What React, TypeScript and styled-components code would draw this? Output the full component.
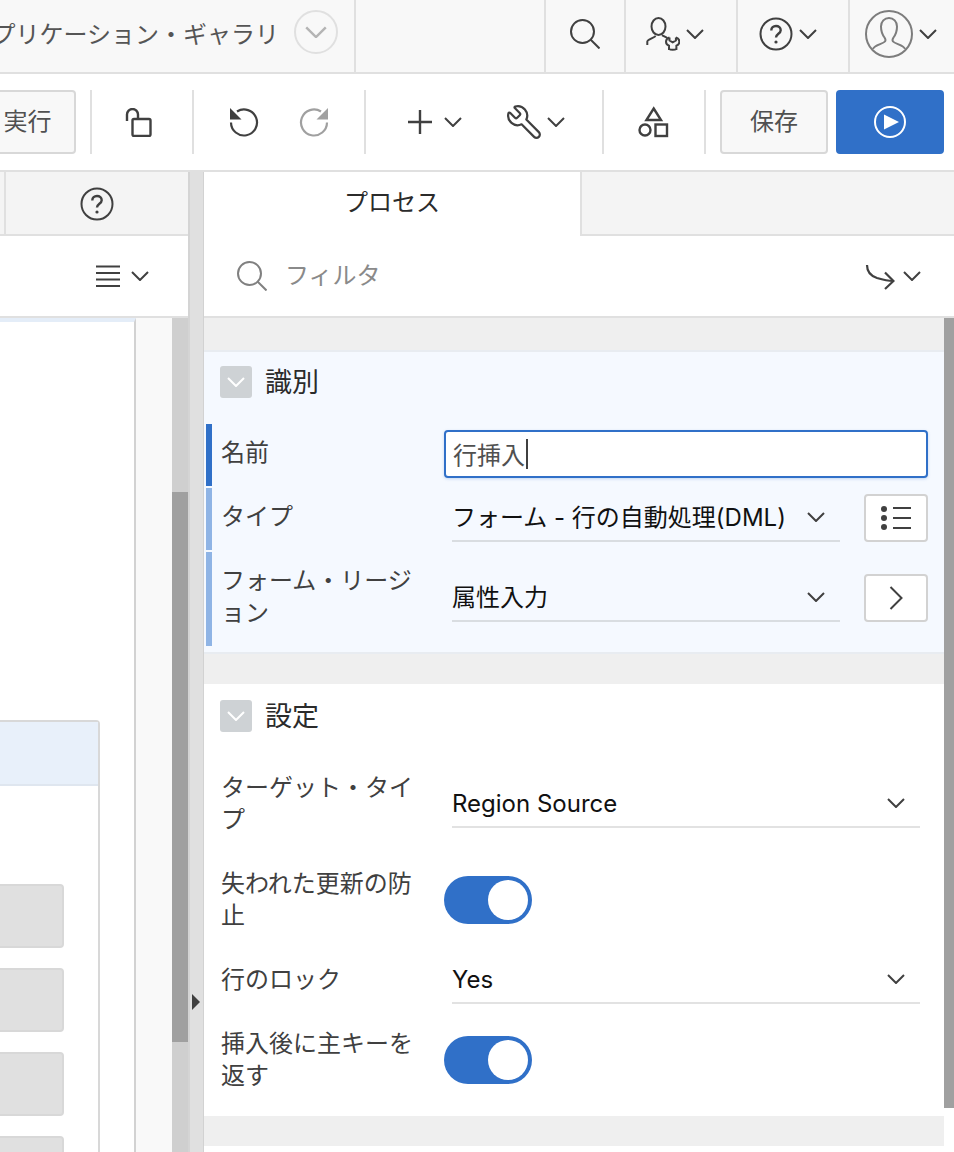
import * as React from "react"
import styled, { createGlobalStyle } from "styled-components"
import { Wrench } from "lucide-react"

const color = {
  ink: "#404040",
  text: "#2b2b2b",
  line: "#e0e0e0",
  lineDark: "#d2d2d2",
  blue: "#3070c8",
  paleBlue: "#f5f9ff",
  gap: "#efefef",
  thumb: "#a0a0a0",
}

const GlobalStyle = createGlobalStyle`
  html, body {
    margin: 0;
    padding: 0;
    background: #fff;
  }
  body {
    font-family: "Inter", "Noto Sans CJK JP", sans-serif;
    font-size: 24px;
    color: ${color.text};
  }
  * {
    box-sizing: border-box;
  }
`

const Page = styled.div`
  width: 954px;
  height: 1152px;
  overflow: hidden;
  display: flex;
  flex-direction: column;
`

/* top header */

const TopBar = styled.header`
  display: flex;
  height: 74px;
  flex: none;
  background: #f8f8f8;
  border-bottom: 2px solid ${color.line};
`

const AppTitle = styled.div`
  width: 356px;
  flex: none;
  display: flex;
  align-items: center;
  justify-content: flex-end;
  gap: 15px;
  padding: 0 16px 8px 0;
  overflow: hidden;
  white-space: nowrap;
  color: #555;
  border-right: 2px solid ${color.line};
`

const TitleMenu = styled.div`
  width: 44px;
  height: 44px;
  flex: none;
  border: 2px solid ${color.line};
  border-radius: 50%;
  display: flex;
  align-items: center;
  justify-content: center;
`

const TopSpacer = styled.div`
  width: 188px;
  flex: none;
`

const TopCell = styled.div<{ $width: number; $inset?: number }>`
  width: ${(p) => p.$width}px;
  flex: none;
  display: flex;
  align-items: center;
  justify-content: center;
  gap: 6px;
  padding: 0 ${(p) => p.$inset ?? 0}px 4px 0;
  border-left: 2px solid ${color.line};
`

/* page designer toolbar */

const ToolBar = styled.div`
  display: flex;
  align-items: stretch;
  height: 98px;
  flex: none;
  padding: 16px 0;
  border-bottom: 2px solid ${color.line};
`

const Button = styled.div`
  display: flex;
  align-items: center;
  justify-content: center;
  flex: none;
  background: #f8f8f8;
  border: 2px solid #d8d8d8;
  border-radius: 4px;
  color: #505050;
`

const RunButton = styled(Button)`
  width: 106px;
  margin-left: -30px;
  padding: 0 0 6px 9px;
  margin-right: 14px;
`

const SaveButton = styled(Button)`
  width: 108px;
  margin-left: 14px;
  margin-right: 8px;
  padding-bottom: 6px;
`

const PlayButton = styled(Button)`
  width: 108px;
  background: ${color.blue};
  border-color: ${color.blue};
`

const ToolDivider = styled.div`
  width: 2px;
  flex: none;
  background: ${color.line};
`

const ToolGroup = styled.div<{ $width: number; $gap: number; $left?: number; $right?: number }>`
  width: ${(p) => p.$width}px;
  flex: none;
  display: flex;
  align-items: center;
  justify-content: center;
  gap: ${(p) => p.$gap}px;
  padding: 0 ${(p) => p.$right ?? 0}px 0 ${(p) => p.$left ?? 0}px;
`

const ToolItem = styled.div<{ $gap: number }>`
  display: flex;
  align-items: center;
  gap: ${(p) => p.$gap}px;
`

const MirroredWrench = styled(Wrench)`
  transform: scaleX(-1);
  color: ${color.ink};
`

/* panels */

const Workspace = styled.div`
  flex: 1;
  min-height: 0;
  display: flex;
`

const LeftPanel = styled.section`
  width: 188px;
  flex: none;
  display: flex;
  flex-direction: column;
`

const Splitter = styled.div`
  width: 16px;
  flex: none;
  position: relative;
  background: ${color.line};
  border-left: 2px solid #d4d4d4;
  border-right: 1px solid ${color.lineDark};
`

const SplitterArrow = styled.div`
  position: absolute;
  left: 2px;
  top: 822px;
  width: 0;
  height: 0;
  border-top: 8px solid transparent;
  border-bottom: 8px solid transparent;
  border-left: 8px solid ${color.ink};
`

const RightPanel = styled.section`
  flex: 1;
  min-width: 0;
  display: flex;
  flex-direction: column;
`

const TabRow = styled.div`
  display: flex;
  height: 64px;
  flex: none;
  background: #f4f4f4;
`

const LeftStub = styled.div`
  width: 6px;
  flex: none;
  border-right: 2px solid ${color.line};
  border-bottom: 2px solid ${color.line};
`

const IconTab = styled.div`
  flex: 1;
  display: flex;
  align-items: center;
  justify-content: center;
  padding-top: 2px;
  border-bottom: 2px solid ${color.line};
`

const ActiveTab = styled.div`
  width: 378px;
  flex: none;
  display: flex;
  align-items: center;
  justify-content: center;
  background: #fff;
  border-right: 2px solid ${color.line};
  padding-bottom: 8px;
`

const TabFill = styled.div`
  flex: 1;
  border-bottom: 2px solid ${color.line};
`

const PanelBar = styled.div`
  height: 82px;
  flex: none;
  display: flex;
  align-items: center;
  justify-content: flex-end;
  gap: 11px;
  padding-right: 39px;
  border-bottom: 2px solid ${color.line};
  background: #fff;
`

const FilterBar = styled(PanelBar)`
  justify-content: flex-start;
  gap: 8px;
  padding: 0 33px 0 33px;
`

const FilterText = styled.div`
  flex: 1;
  margin-left: 10px;
  padding-bottom: 6px;
  color: #8a8a8a;
`

const LeftBody = styled.div`
  flex: 1;
  min-height: 0;
  display: flex;
`

const Canvas = styled.div`
  width: 136px;
  flex: none;
  overflow: hidden;
  background: #fff;
  border-top: 4px solid #e4edf8;
  border-right: 2px solid ${color.lineDark};
  padding-top: 398px;
`

const CanvasCard = styled.div`
  width: 110px;
  height: 500px;
  margin-left: -10px;
  border: 2px solid #d8d8d8;
  border-radius: 4px 4px 0 0;
`

const CardHeader = styled.div`
  height: 64px;
  background: #e8f0fa;
  border-bottom: 2px solid #dfe6ef;
`

const CardBody = styled.div`
  display: flex;
  flex-direction: column;
  gap: 20px;
  padding-top: 98px;
`

const CardSlot = styled.div`
  width: 72px;
  height: 64px;
  flex: none;
  background: #e0e0e0;
  border: 2px solid #d8d8d8;
  border-radius: 4px;
`

const Gutter = styled.div`
  width: 36px;
  flex: none;
  background: #f9f9f9;
`

const ScrollRail = styled.div`
  width: 16px;
  flex: none;
  background: #cfcfcf;
`

const ScrollThumb = styled.div`
  height: 550px;
  margin-top: 174px;
  background: ${color.thumb};
`

/* property editor */

const PropsBody = styled.div`
  flex: 1;
  min-height: 0;
  display: flex;
`

const PropsList = styled.div`
  width: 740px;
  flex: none;
`

const PropsRail = styled.div`
  width: 10px;
  height: 790px;
  flex: none;
  background: ${color.thumb};
`

const GroupGap = styled.div<{ $height: number }>`
  height: ${(p) => p.$height}px;
  background: ${color.gap};
`

const Group = styled.div<{ $active?: boolean }>`
  background: ${(p) => (p.$active ? color.paleBlue : "#fff")};
  border-top: ${(p) => (p.$active ? "2px solid #e8ecf1" : "0")};
  border-bottom: ${(p) => (p.$active ? "2px solid #e8ecf1" : "0")};
  padding-bottom: ${(p) => (p.$active ? 4 : 8)}px;
`

const GroupHeader = styled.div<{ $active?: boolean }>`
  height: 72px;
  display: flex;
  align-items: flex-start;
  gap: 13px;
  padding: ${(p) => (p.$active ? 14 : 16)}px 0 0 16px;
`

const GroupToggle = styled.div`
  width: 32px;
  height: 32px;
  flex: none;
  display: flex;
  align-items: center;
  justify-content: center;
  background: #ced2d5;
  border-radius: 3px;
`

const GroupTitle = styled.h3`
  margin: 0;
  padding-top: 1px;
  font-size: 27px;
  font-weight: 400;
  line-height: 32px;
  color: ${color.text};
`

const Row = styled.div<{ $height: number; $active?: boolean }>`
  height: ${(p) => p.$height}px;
  display: flex;
  align-items: center;
  margin: 0 0 2px 2px;
  padding: ${(p) => (p.$active ? "0 16px 2px 0" : "2px 16px 0 0")};
`

const Marker = styled.div<{ $tone: "active" | "changed" }>`
  width: 6px;
  align-self: stretch;
  margin-bottom: -2px;
  flex: none;
  background: ${(p) => (p.$tone === "active" ? color.blue : "#8fb4e5")};
`

const Label = styled.label<{ $marked?: boolean }>`
  width: ${(p) => (p.$marked ? 232 : 238)}px;
  flex: none;
  padding: 0 14px 0 ${(p) => (p.$marked ? 9 : 15)}px;
  margin-bottom: ${(p) => (p.$marked ? 2 : 0)}px;
  line-height: 32px;
  color: ${color.ink};
`

const TextField = styled.div`
  flex: 1;
  height: 48px;
  display: flex;
  align-items: center;
  padding: 0 0 2px 7px;
  background: #fff;
  border: 2px solid ${color.blue};
  border-radius: 4px;
  color: #505050;
  box-shadow: 0 1px 3px rgba(48, 112, 200, 0.25);
`

const Caret = styled.span`
  display: inline-block;
  width: 2px;
  height: 30px;
  margin: 2px 0 0 1px;
  background: ${color.ink};
`

const SelectField = styled.div<{ $side?: boolean }>`
  flex: 1;
  height: 48px;
  margin: 0 ${(p) => (p.$side ? 24 : 8)}px 0 8px;
  display: flex;
  align-items: center;
  justify-content: space-between;
  padding-right: 15px;
  border-bottom: 2px solid ${(p) => (p.$side ? "#d9dde1" : "#e2e2e2")};
  color: #111;
  white-space: nowrap;
`

const SelectValue = styled.span<{ $side?: boolean }>`
  margin-bottom: ${(p) => (p.$side ? 4 : 0)}px;
`

const SideButton = styled.div`
  width: 64px;
  height: 48px;
  flex: none;
  display: flex;
  align-items: center;
  justify-content: center;
  background: #fff;
  border: 2px solid ${color.lineDark};
  border-radius: 4px;
`

const Toggle = styled.div`
  width: 88px;
  height: 48px;
  flex: none;
  display: flex;
  align-items: center;
  justify-content: flex-end;
  padding-right: 4px;
  background: ${color.blue};
  border-radius: 24px;
`

const Knob = styled.div`
  width: 40px;
  height: 40px;
  border-radius: 50%;
  background: #fff;
`

/* icons */

const Chevron = ({ size = 18, stroke = color.ink }: { size?: number; stroke?: string }) => (
  <svg width={size} height={size * 0.56} viewBox="0 0 18 10" fill="none">
    <path d="M1 1l8 8 8-8" stroke={stroke} strokeWidth={2} />
  </svg>
)

const SearchIcon = ({ stroke }: { stroke: string }) => (
  <svg width="30" height="30" viewBox="0 0 30 30" fill="none" stroke={stroke} strokeWidth={2}>
    <circle cx="12.500" cy="12.500" r="11.500" />
    <path d="M20.500 20.500L29.500 29.500" />
  </svg>
)

const HelpIcon = () => (
  <svg width="34" height="34" viewBox="0 0 34 34" fill="none" stroke={color.ink} strokeWidth={2}>
    <circle cx="17" cy="17" r="15.5" />
    <path d="M12.3 13.5c0-2.8 2-4.5 4.7-4.5s4.7 1.700 4.700 4.200c0 3.600-4.700 3.500-4.700 7.300" strokeWidth={2.4} />
    <circle cx="17" cy="25" r="1.600" fill={color.ink} stroke="none" />
  </svg>
)

const UserToolsIcon = () => (
  <svg width="34" height="34" viewBox="0 0 34 34" fill="none" stroke={color.ink} strokeWidth={2}>
    <ellipse cx="12.500" cy="9.500" rx="7" ry="8.500" />
    <path d="M1.300 28v-3.500c0-1.500 5-3 8.400-5.500M16 18.200c1.500.8 3.500 1.800 5.300 2.800" />
    <path d="M23.500 20.500c-2.200.7-3.500 2.400-3.500 4.200 0 2 1.200 3.300 3 4v4.300M29.900 20.500c2.200.7 3.500 2.400 3.500 4.200 0 2-1.200 3.300-3 4v4.300M23.500 20.500v3l3.200 1.800 3.200-1.800v-3M23 32c1.500 1 5.900 1 7.400 0" />
  </svg>
)

const AvatarIcon = () => (
  <svg width="48" height="48" viewBox="0 0 48 48" fill="none" stroke="#7d7d7d" strokeWidth={2}>
    <circle cx="24" cy="24" r="23" />
    <path d="M8 39c1-4 10-5 12-7.500 1-1.300.5-2.500-.5-4C18 25.500 16 21 16 16.500 16 11.500 19.500 8 24 8s8 3.500 8 8.500c0 4.500-2 9-3.500 11-1 1.500-1.500 2.700-.5 4 2 2.500 11 3.500 12 7.500" />
  </svg>
)

const UnlockIcon = () => (
  <svg width="27" height="29" viewBox="0 0 27 29" fill="none" stroke={color.ink} strokeWidth={2.4}>
    <path d="M2 13V6.500a5.500 5.500 0 0 1 11 0v4" />
    <rect x="7.500" y="11" width="18" height="17" rx="1.500" />
  </svg>
)

const HistoryIcon = ({ stroke, flip }: { stroke: string; flip?: boolean }) => (
  <svg
    width="30"
    height="30"
    viewBox="0 0 30 30"
    fill="none"
    style={flip ? { transform: "scaleX(-1)" } : undefined}
  >
    <path d="M8 4.500A13 13 0 1 1 2 15.500" stroke={stroke} strokeWidth={2.2} />
    <path d="M1 1v11.500h11.500z" fill={stroke} />
  </svg>
)

const PlusIcon = () => (
  <svg width="24" height="24" viewBox="0 0 24 24" stroke={color.ink} strokeWidth={2.4}>
    <path d="M0 12h24M12 0v24" />
  </svg>
)

const ShapesIcon = () => (
  <svg width="32" height="32" viewBox="0 0 32 32" fill="none" stroke={color.ink} strokeWidth={2.4}>
    <path d="M16.700 2.500l7.300 11.500H9.400z" />
    <circle cx="8" cy="24" r="5.500" />
    <rect x="18.500" y="18.500" width="11.500" height="11.500" />
  </svg>
)

const PlayIcon = () => (
  <svg width="34" height="34" viewBox="0 0 34 34" fill="none">
    <circle cx="17" cy="17" r="15" stroke="#fff" strokeWidth={2} />
    <path d="M11 9.500L26 17l-15 7.500z" fill="#fff" />
  </svg>
)

const MenuIcon = () => (
  <svg width="24" height="22" viewBox="0 0 24 22" stroke={color.ink} strokeWidth={2}>
    <path d="M0 1.500h24M0 8h24M0 14.500h24M0 21h24" />
  </svg>
)

const GoToIcon = () => (
  <svg width="30" height="28" viewBox="0 0 30 28" fill="none" stroke={color.ink} strokeWidth={2.2}>
    <path d="M2 3c0 7 4 11 10 13 5 1.500 10 3 16 3" />
    <path d="M20 10.500l8.500 8.500-8.500 8" />
  </svg>
)

const ListIcon = () => (
  <svg width="30" height="24" viewBox="0 0 30 24" fill={color.ink}>
    <circle cx="3" cy="3" r="3" />
    <circle cx="3" cy="12" r="3" />
    <circle cx="3" cy="21" r="3" />
    <path d="M12 2h18M12 12h18M12 22h18" stroke={color.ink} strokeWidth={2} />
  </svg>
)

const ArrowRightIcon = () => (
  <svg width="14" height="24" viewBox="0 0 14 24" fill="none" stroke={color.ink} strokeWidth={2}>
    <path d="M1.500 1l11 11-11 11" />
  </svg>
)

export default function App() {
  return (
    <Page>
      <GlobalStyle />
      <TopBar>
        <AppTitle>
          アプリケーション・ギャラリ
          <TitleMenu>
            <Chevron size={22} stroke="#b4b4b4" />
          </TitleMenu>
        </AppTitle>
        <TopSpacer />
        <TopCell $width={80}>
          <SearchIcon stroke={color.ink} />
        </TopCell>
        <TopCell $width={112} $inset={12}>
          <UserToolsIcon />
          <Chevron />
        </TopCell>
        <TopCell $width={112} $inset={11}>
          <HelpIcon />
          <Chevron />
        </TopCell>
        <TopCell $width={106} $inset={3}>
          <AvatarIcon />
          <Chevron />
        </TopCell>
      </TopBar>

      <ToolBar>
        <RunButton>実行</RunButton>
        <ToolDivider />
        <ToolGroup $width={100} $gap={0} $right={8}>
          <UnlockIcon />
        </ToolGroup>
        <ToolDivider />
        <ToolGroup $width={170} $gap={40}>
          <HistoryIcon stroke={color.ink} />
          <HistoryIcon stroke={color.thumb} flip />
        </ToolGroup>
        <ToolDivider />
        <ToolGroup $width={236} $gap={43} $left={4}>
          <ToolItem $gap={12}>
            <PlusIcon />
            <Chevron />
          </ToolItem>
          <ToolItem $gap={4}>
            <MirroredWrench size={38} strokeWidth={1.4} />
            <Chevron />
          </ToolItem>
        </ToolGroup>
        <ToolDivider />
        <ToolGroup $width={100} $gap={0} $right={2}>
          <ShapesIcon />
        </ToolGroup>
        <ToolDivider />
        <SaveButton>保存</SaveButton>
        <PlayButton>
          <PlayIcon />
        </PlayButton>
      </ToolBar>

      <Workspace>
        <LeftPanel>
          <TabRow>
            <LeftStub />
            <IconTab>
              <HelpIcon />
            </IconTab>
          </TabRow>
          <PanelBar>
            <MenuIcon />
            <Chevron />
          </PanelBar>
          <LeftBody>
            <Canvas>
              <CanvasCard>
                <CardHeader />
                <CardBody>
                  <CardSlot />
                  <CardSlot />
                  <CardSlot />
                  <CardSlot />
                </CardBody>
              </CanvasCard>
            </Canvas>
            <Gutter />
            <ScrollRail>
              <ScrollThumb />
            </ScrollRail>
          </LeftBody>
        </LeftPanel>

        <Splitter>
          <SplitterArrow />
        </Splitter>

        <RightPanel>
          <TabRow>
            <ActiveTab>プロセス</ActiveTab>
            <TabFill />
          </TabRow>
          <FilterBar>
            <SearchIcon stroke="#808080" />
            <FilterText>フィルタ</FilterText>
            <GoToIcon />
            <Chevron />
          </FilterBar>
          <PropsBody>
            <PropsList>
              <GroupGap $height={32} />
              <Group $active>
                <GroupHeader $active>
                  <GroupToggle>
                    <Chevron stroke="#fff" />
                  </GroupToggle>
                  <GroupTitle>識別</GroupTitle>
                </GroupHeader>
                <Row $height={62} $active>
                  <Marker $tone="active" />
                  <Label $marked>名前</Label>
                  <TextField>
                    行挿入
                    <Caret />
                  </TextField>
                </Row>
                <Row $height={62} $active>
                  <Marker $tone="changed" />
                  <Label $marked>タイプ</Label>
                  <SelectField $side>
                    <SelectValue $side>フォーム - 行の自動処理(DML)</SelectValue>
                    <Chevron />
                  </SelectField>
                  <SideButton>
                    <ListIcon />
                  </SideButton>
                </Row>
                <Row $height={94} $active>
                  <Marker $tone="changed" />
                  <Label $marked>フォーム・リージョン</Label>
                  <SelectField $side>
                    <SelectValue $side>属性入力</SelectValue>
                    <Chevron />
                  </SelectField>
                  <SideButton>
                    <ArrowRightIcon />
                  </SideButton>
                </Row>
              </Group>
              <GroupGap $height={30} />
              <Group>
                <GroupHeader>
                  <GroupToggle>
                    <Chevron stroke="#fff" />
                  </GroupToggle>
                  <GroupTitle>設定</GroupTitle>
                </GroupHeader>
                <Row $height={94}>
                  <Label>ターゲット・タイプ</Label>
                  <SelectField>
                    <SelectValue>Region Source</SelectValue>
                    <Chevron />
                  </SelectField>
                </Row>
                <Row $height={94}>
                  <Label>失われた更新の防止</Label>
                  <Toggle>
                    <Knob />
                  </Toggle>
                </Row>
                <Row $height={62}>
                  <Label>行のロック</Label>
                  <SelectField>
                    <SelectValue>Yes</SelectValue>
                    <Chevron />
                  </SelectField>
                </Row>
                <Row $height={94}>
                  <Label>挿入後に主キーを返す</Label>
                  <Toggle>
                    <Knob />
                  </Toggle>
                </Row>
              </Group>
              <GroupGap $height={30} />
            </PropsList>
            <PropsRail />
          </PropsBody>
        </RightPanel>
      </Workspace>
    </Page>
  )
}
